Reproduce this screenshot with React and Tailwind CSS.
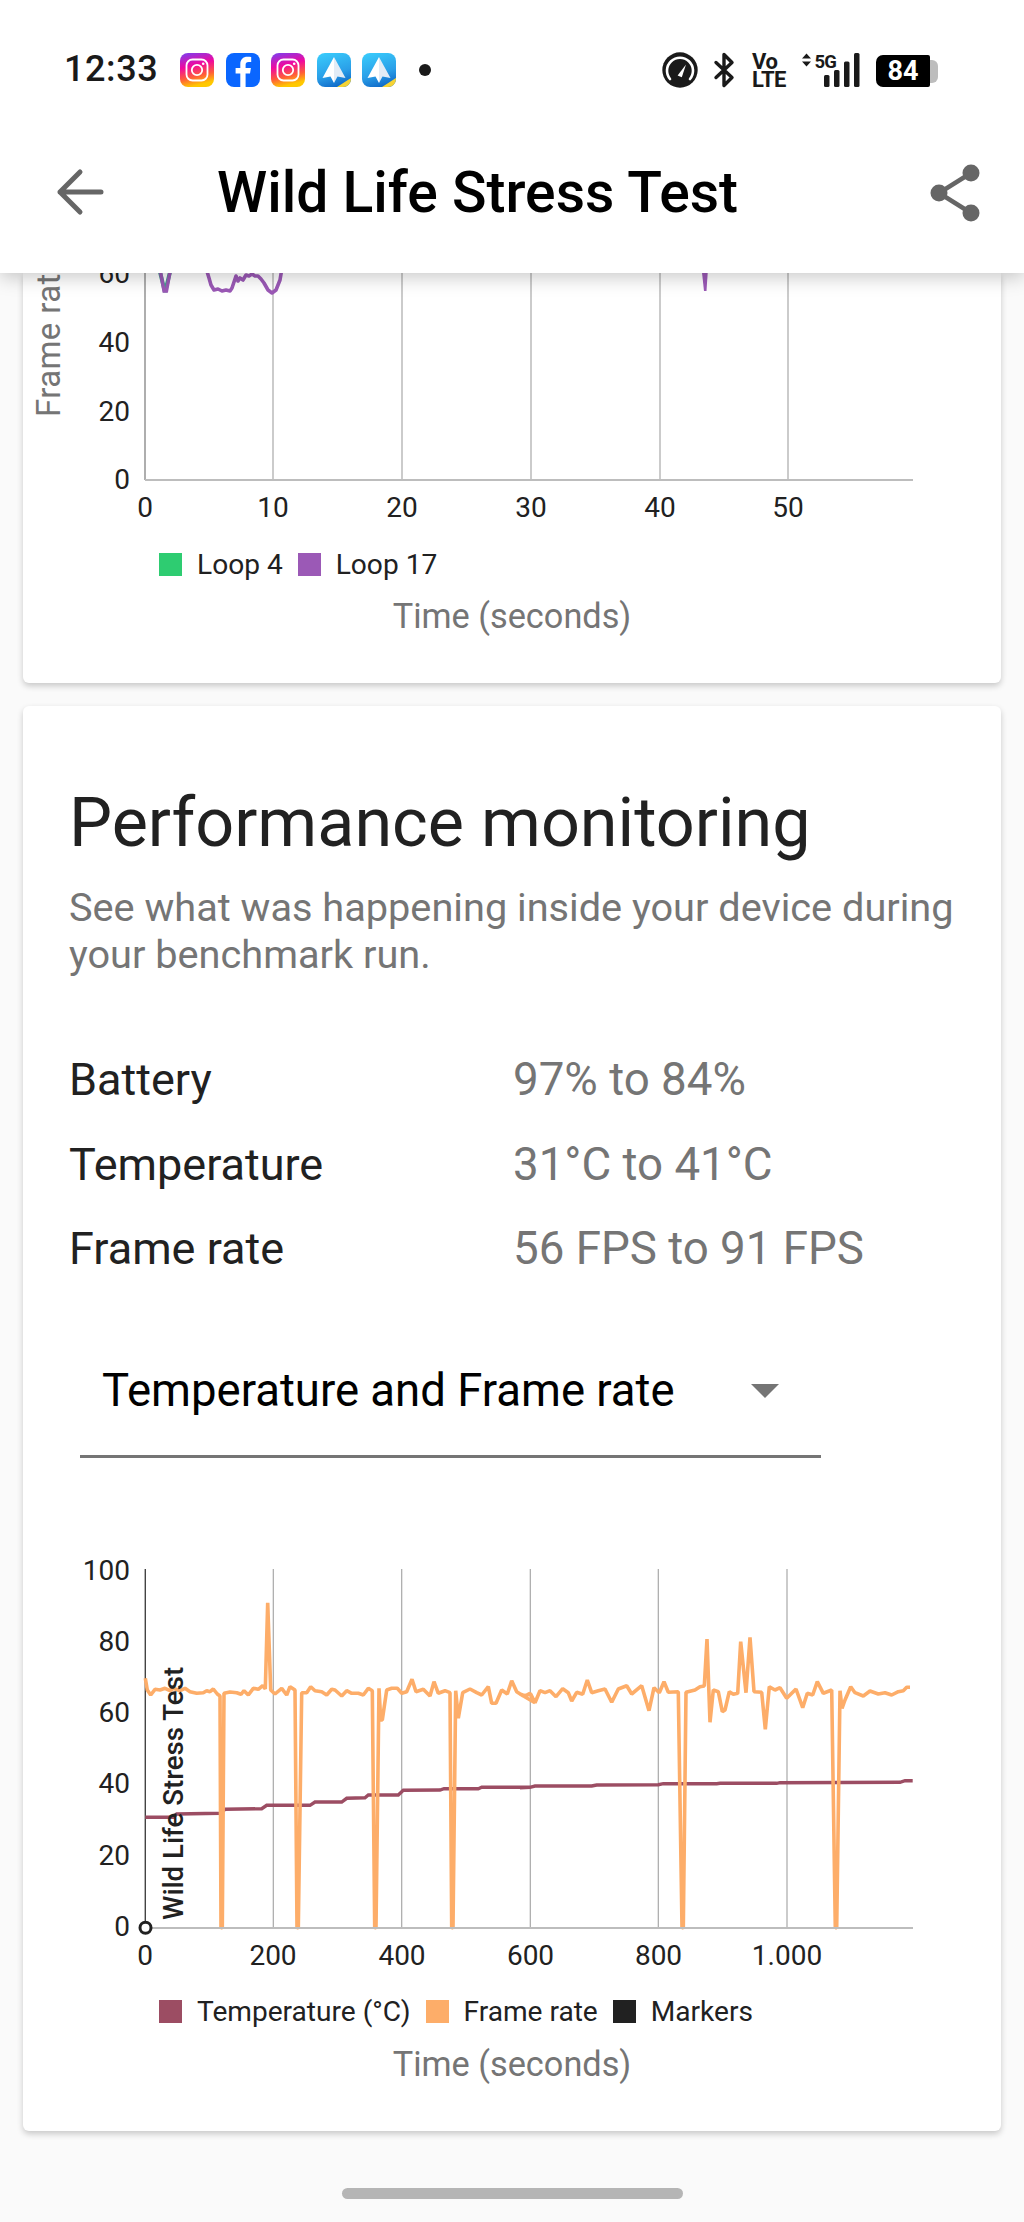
import React from "react";

const z3 = [[316,415],[322,450],[332,465],[345,448],[360,450],[375,445],[390,452],[400,445],[420,452],[435,445],[450,455],[470,460],[490,458],[500,452],[510,455],[520,447],[532,462],[540,468],[545,1163],[552,460],[570,456],[590,458],[603,463],[612,452],[625,465],[640,445],[655,448],[668,437],[676,447],[683,188],[692,450],[705,462],[725,445],[740,465],[750,440],[765,450],[773,1163],[785,458],[800,458],[812,440],[825,452],[845,455],[860,465],[875,448],[885,450],[905,468],[920,452],[935,460],[955,460],[970,465],[985,445],[997,452],[1006,1163],[1017,445],[1022,540],[1027,540],[1040,450],[1055,445],[1072,445],[1085,460],[1100,455],[1116,418],[1128,455],[1150,448],[1170,468],[1182,425],[1195,460],[1215,452],[1230,458],[1237,1163],[1247,452],[1255,535],[1268,458],[1290,447],[1310,458],[1325,465],[1345,440],[1355,490],[1368,490],[1385,450],[1402,462],[1415,422],[1430,455],[1450,468],[1472,462],[1485,488]];
const z4 = [[0,462],[15,468],[30,460],[45,488],[60,452],[75,458],[90,452],[108,470],[128,446],[145,458],[155,483],[170,457],[188,463],[202,420],[215,458],[235,452],[255,447],[275,487],[295,447],[320,437],[335,462],[365,437],[387,512],[402,443],[418,458],[432,425],[445,457],[475,455],[488,1163],[498,457],[525,450],[540,440],[553,438],[561,297],[570,547],[580,450],[595,455],[607,515],[615,510],[628,455],[640,463],[653,460],[662,305],[678,458],[690,292],[702,455],[725,457],[736,568],[748,440],[765,450],[780,443],[800,475],[828,447],[848,503],[862,460],[878,465],[892,425],[910,460],[935,450],[948,1163],[960,452],[966,505],[975,480],[992,440],[1005,458],[1030,468],[1050,453],[1075,462],[1095,458],[1115,465],[1135,455],[1150,452],[1160,442],[1170,442]];
const t3 = [[316,832],[400,832],[410,822],[540,820],[555,808],[665,806],[680,796],[810,796],[825,786],[905,786],[920,775],[975,773],[985,765],[1075,765],[1090,751],[1200,750],[1212,746],[1315,746],[1325,742],[1470,742]];
const t4 = [[0,743],[30,742],[45,738],[215,738],[230,735],[415,734],[430,731],[590,731],[600,730],[770,730],[780,728],[1140,727],[1155,722],[1178,722]];
const toPts = (a, ox) =>
  a
    .flatMap(([x, y]) => (y === 1163 ? [[x - 2, y], [x + 2, y]] : [[x, y]]))
    .map(([x, y]) => `${(ox + x / 3).toFixed(1)},${(1540 + y / 3).toFixed(1)}`)
    .join(" ");
const frame = toPts(z3, 40) + " " + toPts(z4, 520);
const temp = toPts(t3, 40) + " " + toPts(t4, 520);

const Insta = ({ id }) => (
  <svg width="34" height="34" viewBox="0 0 34 34" className="shrink-0">
    <defs>
      <linearGradient id={id} x1="0.05" y1="0" x2="0.3" y2="1">
        <stop offset="0" stopColor="#7a3ff0" />
        <stop offset="0.42" stopColor="#f008a0" />
        <stop offset="0.75" stopColor="#ff5f38" />
        <stop offset="1" stopColor="#ffc800" />
      </linearGradient>
    </defs>
    <rect width="34" height="34" rx="8" fill={`url(#${id})`} />
    <rect x="6.5" y="6.5" width="21" height="21" rx="6" fill="none" stroke="#fff" strokeWidth="1.8" />
    <circle cx="17" cy="17" r="5.2" fill="none" stroke="#fff" strokeWidth="1.8" />
    <circle cx="23.2" cy="10.8" r="1.3" fill="#fff" />
  </svg>
);

const Fb = () => (
  <svg width="34" height="34" viewBox="0 0 34 34" className="shrink-0">
    <rect width="34" height="34" rx="8" fill="#0a66ff" />
    <path d="M19.6 34V20.6h4.4l.9-5.6h-5.3v-3c0-1.7.8-3 3-3h2.6V4.1c-1-.1-2.4-.3-3.8-.3-4.3 0-7.1 2.6-7.1 7.2v4H9.6v5.6h4.7V34z" fill="#fff" />
  </svg>
);

const Plane = ({ id }) => (
  <svg width="34" height="34" viewBox="0 0 34 34" className="shrink-0">
    <defs>
      <linearGradient id={id} x1="0.3" y1="0" x2="0.6" y2="1">
        <stop offset="0" stopColor="#38c8fa" />
        <stop offset="0.6" stopColor="#2a9fe8" />
        <stop offset="1" stopColor="#0f69c8" />
      </linearGradient>
      <clipPath id={id + "c"}>
        <rect width="34" height="34" rx="8" />
      </clipPath>
    </defs>
    <g clipPath={`url(#${id}c)`}>
      <rect width="34" height="34" fill={`url(#${id})`} />
      <path d="M20 34 L34 25 V34 Z" fill="#f6d334" />
    </g>
    <path d="M17 4 L5.5 25 L13.5 23.5 L17 30 Z" fill="#fff" />
    <path d="M17 4 L28.5 25 L20.5 23.5 L17 30 Z" fill="#e3ecf6" />
  </svg>
);

const StatusBar = () => (
  <div className="h-[105px] flex items-start">
    <div className="ml-[64px] mt-[49px] w-[116px] text-[36px] leading-[40px] font-medium text-[#1a1a1a] tracking-[0.6px]">12:33</div>
    <div className="mt-[53px] flex items-center gap-[11.5px]">
      <Insta id="ig1" />
      <Fb />
      <Insta id="ig2" />
      <Plane id="pl1" />
      <Plane id="pl2" />
      <div className="ml-[11px] w-[12px] h-[12px] rounded-full bg-[#1a1a1a]" />
    </div>
    <div className="ml-auto mr-[86px] mt-[52px] flex items-start">
      <svg width="36" height="36" viewBox="0 0 36 36" className="shrink-0">
        <circle cx="18" cy="18" r="17.7" fill="#1a1a1a" />
        <path d="M8 27 A13 13 0 1 1 28 27" fill="none" stroke="#fff" strokeWidth="2.6" strokeLinecap="round" />
        <path d="M15.6 23.6 L24 12.5 L19.8 25.2 Z" fill="#fff" />
      </svg>
      <svg width="22" height="36" viewBox="0 0 22 36" className="ml-[15px] shrink-0">
        <path d="M3 10.5 L19 25.5 L11 33.5 V2.5 L19 10.5 L3 25.5" fill="none" stroke="#1a1a1a" strokeWidth="3.4" strokeLinejoin="round" strokeLinecap="round" />
      </svg>
      <div className="ml-[17px] w-[32px] flex flex-col font-bold text-[#1a1a1a] text-[22px] leading-[18px] tracking-[-0.5px] pt-[1px]">
        <span>Vo</span>
        <span>LTE</span>
      </div>
      <svg width="60" height="36" viewBox="0 0 60 36" className="ml-[18px] shrink-0">
        <path d="M4.5 1.5 L9 6.5 H0 Z M4.5 14.5 L9 9.5 H0 Z" fill="#1a1a1a" />
        <text x="12.5" y="15.5" fontSize="18.5" fontWeight="700" fill="#1a1a1a" letterSpacing="-0.8">5G</text>
        <rect x="22" y="23" width="5.5" height="12" rx="1.5" fill="#1a1a1a" />
        <rect x="32" y="18" width="5.5" height="17" rx="1.5" fill="#1a1a1a" />
        <rect x="42" y="9.5" width="5.5" height="25.5" rx="1.5" fill="#1a1a1a" />
        <rect x="52" y="1" width="5.5" height="34" rx="1.5" fill="#1a1a1a" />
      </svg>
      <div className="ml-[14px] mt-[3px] flex items-center">
        <div className="w-[54px] h-[32px] rounded-l-[7px] rounded-r-[2px] bg-black text-white font-bold text-[27px] leading-[32px] text-center">84</div>
        <div className="w-[8px] h-[23px] rounded-r-[6px] bg-[#bdbdbd]" />
      </div>
    </div>
  </div>
);

const Toolbar = () => (
  <div className="h-[168px] flex items-center">
    <svg width="60" height="60" viewBox="0 0 60 60" className="ml-[50px] mt-[10px] shrink-0">
      <path d="M10 28 H51 M10 28 L30 8 M10 28 L30 48" fill="none" stroke="#666" strokeWidth="5" strokeLinecap="round" strokeLinejoin="round" />
    </svg>
    <div className="ml-[107px] mt-[8px] text-[57px] leading-[60px] font-medium text-black whitespace-nowrap">Wild Life Stress Test</div>
    <svg width="56" height="60" viewBox="0 0 56 60" className="ml-auto mr-[42px] mt-[9px] shrink-0">
      <g fill="#666" stroke="#666">
        <path d="M45 9 L13 29 L45 49" fill="none" strokeWidth="4.5" />
        <circle cx="45" cy="9" r="8.5" stroke="none" />
        <circle cx="13" cy="29" r="8.5" stroke="none" />
        <circle cx="45" cy="49" r="8.5" stroke="none" />
      </g>
    </svg>
  </div>
);

const Legend = ({ items }) => (
  <div className="pl-[136px] flex items-center h-[23px]">
    {items.map(([label, color]) => (
      <div key={label} className="flex items-center mr-[15px]">
        <span className="w-[23px] h-[23px] mr-[15px]" style={{ background: color }} />
        <span className="text-[28.1px] leading-[23px] text-[#212121] whitespace-nowrap">{label}</span>
      </div>
    ))}
  </div>
);

const TimeLabel = () => (
  <div className="text-center text-[34.3px] leading-[40px] text-[#757575]">Time (seconds)</div>
);

const ChartOne = () => (
  <svg width="978" height="250" viewBox="23 273 978 250" className="block">
    <text transform="translate(60 417) rotate(-90)" fontSize="33" fill="#757575" letterSpacing="0.4">Frame rate</text>
    {[273, 402, 531, 660, 788].map((x) => (
      <line key={x} x1={x} x2={x} y1="273" y2="480" stroke="#a8a8a8" strokeWidth="1.2" />
    ))}
    <line x1="145" x2="145" y1="273" y2="480" stroke="#9a9a9a" strokeWidth="1.6" />
    <polyline points="160,272 165,292 170,272" fill="none" stroke="#45a08f" strokeWidth="4" />
    <polyline points="160.5,272 164,291 166.5,291 170,272" fill="none" stroke="#9b59b6" strokeWidth="3.4" />
    <polyline points="206,268 209,278 211,285 214,290 218,289 222,291 226,290 230,291 232,288 236,276 238,281 240,278 243,280 246,275 249,276 252,274 255,276 258,276 261,279 264,283 268,290 272,293 276,290 280,280 282,268" fill="none" stroke="#9b59b6" strokeWidth="3.6" strokeLinejoin="round" />
    <polygon points="701.5,268 708,268 706.5,291 704,291" fill="#9b59b6" />
    <line x1="145" x2="913" y1="480" y2="480" stroke="#bdbdbd" strokeWidth="2" />
    <g fontSize="28" fill="#212121" textAnchor="end">
      <text x="130" y="283">60</text>
      <text x="130" y="352">40</text>
      <text x="130" y="421">20</text>
      <text x="130" y="489">0</text>
    </g>
    <g fontSize="28" fill="#212121" textAnchor="middle">
      {[[145, "0"], [273, "10"], [402, "20"], [531, "30"], [660, "40"], [788, "50"]].map(([x, t]) => (
        <text key={t} x={x} y="517">{t}</text>
      ))}
    </g>
  </svg>
);

const ChartTwo = () => (
  <svg width="978" height="440" viewBox="23 1540 978 440" className="block">
    {[273.3, 401.7, 530.3, 658.3, 787].map((x) => (
      <line key={x} x1={x} x2={x} y1="1569" y2="1928" stroke="#a8a8a8" strokeWidth="1.2" />
    ))}
    <line x1="145.3" x2="145.3" y1="1569" y2="1928" stroke="#444" strokeWidth="1.4" />
    <polyline points={temp} fill="none" stroke="#9c4d63" strokeWidth="3.4" />
    <polyline points={frame} fill="none" stroke="#fdad69" strokeWidth="3.6" strokeLinejoin="bevel" />
    <line x1="145" x2="913" y1="1928" y2="1928" stroke="#bdbdbd" strokeWidth="2" />
    <g fontSize="28" fill="#212121" textAnchor="end">
      <text x="130" y="1580">100</text>
      <text x="130" y="1651">80</text>
      <text x="130" y="1722">60</text>
      <text x="130" y="1793">40</text>
      <text x="130" y="1865">20</text>
      <text x="130" y="1936">0</text>
    </g>
    <g fontSize="28" fill="#212121" textAnchor="middle">
      {[[145, "0"], [273, "200"], [402, "400"], [530.5, "600"], [658.5, "800"], [787, "1.000"]].map(([x, t]) => (
        <text key={t} x={x} y="1965">{t}</text>
      ))}
    </g>
    <text transform="translate(183 1920) rotate(-90)" fontSize="27.7" fontWeight="500" fill="#212121">Wild Life Stress Test</text>
    <circle cx="145.5" cy="1927.7" r="5.5" fill="#fff" stroke="#212121" strokeWidth="3" />
  </svg>
);

const Row = ({ label, value }) => (
  <div className="flex h-[84.5px] items-center leading-[50px]">
    <div className="w-[444px] text-[45px] text-[#212121]">{label}</div>
    <div className="text-[45.7px] text-[#757575]">{value}</div>
  </div>
);

export default function App() {
  return (
    <div className="w-[1024px] h-[2222px] bg-[#fafafa] overflow-hidden flex flex-col [font-family:Roboto,sans-serif]">
      <header className="relative z-10 h-[273px] shrink-0 bg-white shadow-[0_4px_18px_rgba(0,0,0,0.22)]">
        <StatusBar />
        <Toolbar />
      </header>
      <main className="px-[23px] flex flex-col">
        <section className="h-[410px] shrink-0 bg-white rounded-b-[6px] overflow-hidden shadow-[0_3px_6px_rgba(0,0,0,0.2)]">
          <ChartOne />
          <div className="mt-[30px]"><Legend items={[["Loop 4", "#2ecc71"], ["Loop 17", "#9b59b6"]]} /></div>
          <div className="mt-[20px]"><TimeLabel /></div>
        </section>
        <section className="mt-[23px] h-[1425px] shrink-0 bg-white rounded-[6px] shadow-[0_3px_6px_rgba(0,0,0,0.2)]">
          <div className="pl-[46px] pt-[78px]">
            <h2 className="text-[68.3px] leading-[78px] text-[#212121]">Performance monitoring</h2>
            <p className="mt-[22px] w-[935px] text-[39.7px] leading-[47px] text-[#757575]">See what was happening inside your device during your benchmark run.</p>
            <div className="mt-[60px]">
              <Row label="Battery" value="97% to 84%" />
              <Row label="Temperature" value="31°C to 41°C" />
              <Row label="Frame rate" value="56 FPS to 91 FPS" />
            </div>
          </div>
          <div className="mt-[35px] ml-[57px] w-[741px] h-[131px] border-b-[3px] border-[#757575] flex items-center justify-between pl-[22px] pr-[42px]">
            <span className="text-[45.5px] leading-[54px] text-black">Temperature and Frame rate</span>
            <svg width="28" height="14" viewBox="0 0 28 14" className="shrink-0"><path d="M0 0 H28 L14 14 Z" fill="#757575" /></svg>
          </div>
          <div className="mt-[82px]">
            <ChartTwo />
            <div className="mt-[20px]"><Legend items={[["Temperature (°C)", "#9c4d63"], ["Frame rate", "#fdad69"], ["Markers", "#212121"]]} /></div>
            <div className="mt-[21px]"><TimeLabel /></div>
          </div>
        </section>
        <div className="mt-[57px] self-center w-[341px] h-[11px] shrink-0 rounded-full bg-[#b5b5b5]" />
      </main>
    </div>
  );
}
